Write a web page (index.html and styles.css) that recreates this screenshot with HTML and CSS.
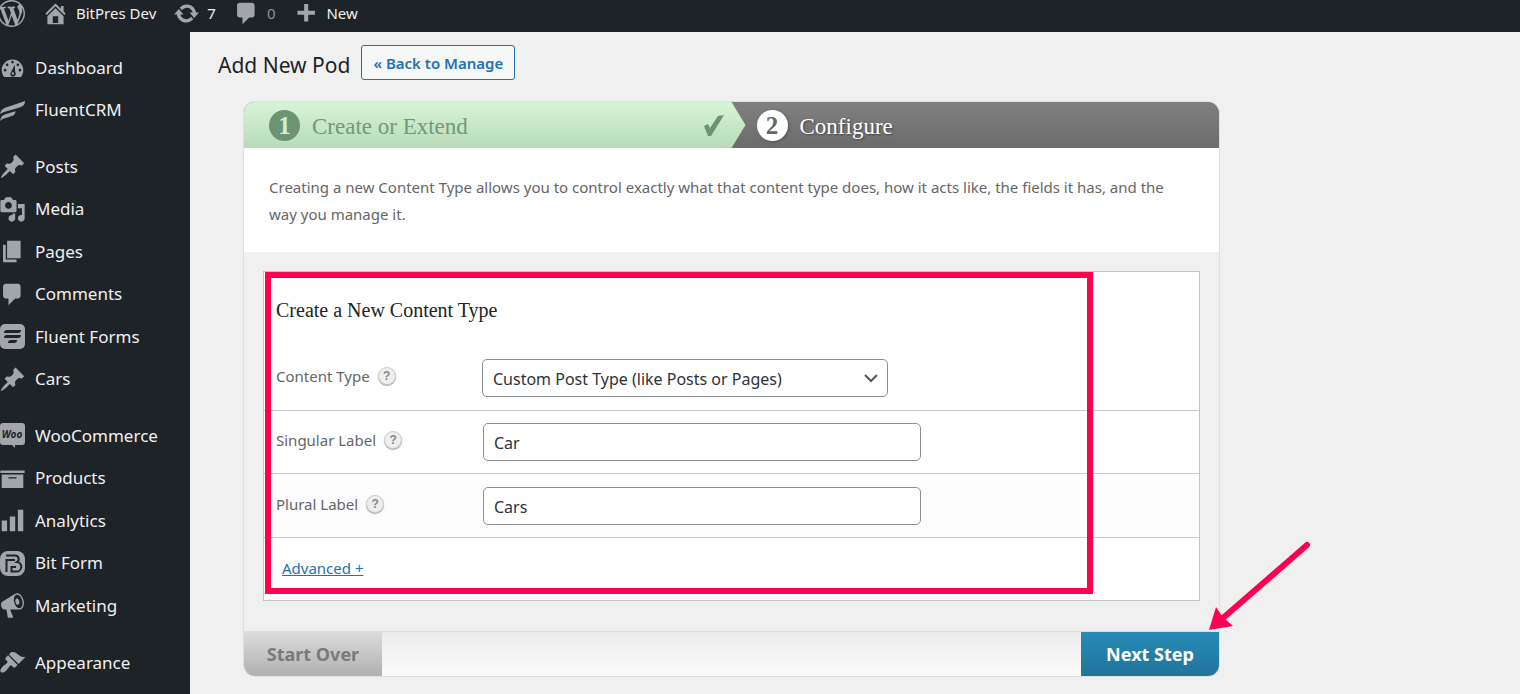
FILE: index.html
```html
<!DOCTYPE html>
<html lang="en">
<head>
<meta charset="utf-8">
<title>Add New Pod</title>
<link rel="stylesheet" href="styles.css">
</head>
<body>
<header class="topbar">
  <a class="bar-item logo" href="#" aria-label="About WordPress"><svg class="icon" viewBox="0 0 20 20"><path d="M20 10c0-5.51-4.49-10-10-10C4.48 0 0 4.49 0 10c0 5.52 4.48 10 10 10 5.51 0 10-4.48 10-10zM7.78 15.37L4.37 6.22c.55-.02 1.17-.08 1.17-.08.5-.06.44-1.13-.06-1.11 0 0-1.45.11-2.37.11-.18 0-.37 0-.58-.01C4.12 2.69 6.87 1.11 10 1.11c2.33 0 4.45.87 6.05 2.34-.68-.11-1.65.39-1.65 1.58 0 .74.45 1.36.9 2.1.35.61.55 1.36.55 2.46 0 1.49-1.4 5-1.4 5l-3.03-8.37c.54-.02.82-.17.82-.17.5-.05.44-1.25-.06-1.22 0 0-1.44.12-2.38.12-.87 0-2.33-.12-2.33-.12-.5-.03-.56 1.2-.06 1.22l.92.08 1.26 3.41zM17.41 10c.24-.64.74-1.87.43-4.25.7 1.29 1.05 2.71 1.05 4.25 0 3.29-1.73 6.24-4.4 7.78.97-2.59 1.94-5.2 2.92-7.78zM6.1 18.09C3.12 16.65 1.11 13.53 1.11 10c0-1.3.23-2.48.72-3.59C3.25 10.3 4.67 14.2 6.1 18.09zm4.03-6.63l2.58 6.98c-.86.29-1.76.45-2.71.45-.79 0-1.57-.11-2.29-.33.81-2.38 1.62-4.74 2.42-7.1z"/></svg></a>
  <a class="bar-item" href="#"><svg class="icon" viewBox="0 0 20 20"><path d="M16 8.5l1.53 1.53-1.06 1.06L10 4.6l-6.47 6.49-1.06-1.06L10 2.5l4 4v-2h2v4zm-6-2.46l6 5.99V18H4v-5.97zM12 17v-5H8v5h4z"/></svg>BitPres Dev</a>
  <a class="bar-item" href="#"><svg class="icon" viewBox="0 0 20 20"><path d="M10.2 3.28c3.53 0 6.43 2.61 6.92 6h2.08l-3.5 4-3.5-4h2.32c-.45-1.97-2.21-3.45-4.32-3.45-1.45 0-2.73.71-3.54 1.78L4.95 5.66C6.23 4.2 8.11 3.28 10.2 3.28zm-.4 13.44c-3.52 0-6.43-2.61-6.92-6H.8l3.5-4c1.17 1.33 2.33 2.67 3.5 4H5.48c.45 1.97 2.21 3.45 4.32 3.45 1.45 0 2.73-.71 3.54-1.78l1.71 1.95c-1.28 1.46-3.15 2.38-5.25 2.38z"/></svg>7</a>
  <a class="bar-item muted" href="#"><svg class="icon" viewBox="0 0 20 20"><path d="M5 2h9c1.1 0 2 .9 2 2v7c0 1.1-.9 2-2 2h-2l-5 5v-5H5c-1.1 0-2-.9-2-2V4c0-1.1.9-2 2-2z"/></svg>0</a>
  <a class="bar-item" href="#"><svg class="icon" viewBox="0 0 20 20"><path d="M17 8v3h-5v5H9v-5H4V8h5V3h3v5z"/></svg>New</a>
</header>
<div class="layout">
  <nav class="sidebar">
    <ul class="menu">
      <li><a href="#"><svg class="icon" viewBox="0 0 20 20"><path fill-rule="evenodd" d="M3.76 17h12.48c1.07-1.39 1.76-3.13 1.76-5 0-4.42-3.58-8-8-8s-8 3.58-8 8c0 1.87.69 3.61 1.76 5zM9 6a1 1 0 1 1 2 0a1 1 0 1 1-2 0zM5 8a1 1 0 1 1 2 0a1 1 0 1 1-2 0zM13 8a1 1 0 1 1 2 0a1 1 0 1 1-2 0zM3.500 12a1 1 0 1 1 2 0a1 1 0 1 1-2 0zM14.500 12a1 1 0 1 1 2 0a1 1 0 1 1-2 0zM11.600 8l.4 5.600a2 2 0 1 1-3-.3zM10.200 13.600a.9.900 0 1 0 .1 1.800a.9.900 0 0 0-.1-1.800z"/></svg>Dashboard</a></li>
      <li><a href="#"><svg class="icon" viewBox="0 2 27 27"><path d="M1 19c1-5 4-6 9-7.500L26 6c0 4-2 5.500-7 7L5 17c-2 .6-3 1.100-4 2zM1 26c1-5 3-6 7-7.200l8.500-2.500c-.3 3-1.500 4.200-5 5.200L5 23.500c-2 .6-3 1.300-4 2.500z"/></svg>FluentCRM</a></li>
    </ul>
    <ul class="menu">
      <li><a href="#"><svg class="icon" viewBox="0 0 20 20"><path d="M10.440 3.020l1.820-1.820 6.360 6.350-1.830 1.820c-1.050-.68-2.480-.57-3.410.36l-.75.75c-.92.930-1.040 2.350-.35 3.410l-1.830 1.820-2.410-2.410-2.800 2.790c-.42.420-3.380 2.710-3.800 2.290s1.860-3.390 2.280-3.810l2.790-2.790L4.100 9.360l1.830-1.820c1.050.69 2.480.57 3.400-.36l.75-.75c.93-.92 1.050-2.350.36-3.410z"/></svg>Posts</a></li>
      <li><a href="#"><svg class="icon" viewBox="0 0 20 20"><path d="M13 11V4c0-.55-.45-1-1-1h-1.670L9 1H5L3.670 3H2c-.55 0-1 .45-1 1v7c0 .55.45 1 1 1h10c.55 0 1-.45 1-1zM7 4.500c1.380 0 2.500 1.120 2.500 2.500S8.380 9.500 7 9.500 4.500 8.380 4.500 7 5.620 4.500 7 4.500zM14 6h5v10.500c0 1.380-1.120 2.500-2.500 2.500S14 17.880 14 16.500s1.120-2.500 2.500-2.500c.17 0 .34.020.5.050V9h-3V6zm-4 8.050V13h2v3.500c0 1.380-1.120 2.500-2.500 2.500S7 17.880 7 16.500 8.120 14 9.500 14c.17 0 .34.020.5.050z"/></svg>Media</a></li>
      <li><a href="#"><svg class="icon" viewBox="0 0 20 20"><path d="M6 15V2h10v13H6zm-1 1h8v2H3V5h2v11z"/></svg>Pages</a></li>
      <li><a href="#"><svg class="icon" viewBox="0 0 20 20"><path d="M5 2h9c1.100 0 2 .9 2 2v7c0 1.100-.9 2-2 2h-2l-5 5v-5H5c-1.100 0-2-.9-2-2V4c0-1.100.9-2 2-2z"/></svg>Comments</a></li>
      <li><a href="#"><svg class="icon" viewBox="0 0 27 27"><rect x="1" y="1" width="25" height="25" rx="5"/><path class="cut" d="M8 7h14c0 2-1 3-3 3H5c0-2 1-3 3-3zM8 12h14c0 2-1 3-3 3H5c0-2 1-3 3-3zM12 17h6c0 2-1 3-3 3H9c0-2 1-3 3-3z"/></svg>Fluent Forms</a></li>
      <li><a href="#"><svg class="icon" viewBox="0 0 20 20"><path d="M10.440 3.020l1.820-1.820 6.360 6.350-1.830 1.820c-1.050-.68-2.480-.57-3.410.36l-.75.75c-.92.930-1.040 2.350-.35 3.410l-1.830 1.820-2.410-2.410-2.800 2.790c-.42.420-3.380 2.710-3.800 2.290s1.860-3.390 2.280-3.810l2.790-2.790L4.100 9.360l1.830-1.820c1.050.69 2.480.57 3.400-.36l.75-.75c.93-.92 1.050-2.350.36-3.410z"/></svg>Cars</a></li>
    </ul>
    <ul class="menu">
      <li><a href="#"><svg class="icon" viewBox="0 0 27 27"><path d="M4 1h19q3 0 3 3v16q0 3-3 3h-7v3l-3-3H4q-3 0-3-3V4q0-3 3-3z"/><text class="woo" x="13" y="16" text-anchor="middle">Woo</text></svg>WooCommerce</a></li>
      <li><a href="#"><svg class="icon" viewBox="0 0 20 20"><path d="M19 4v2H1V4h18zM2 7h16v10H2V7zm11 3V9H7v1h6z"/></svg>Products</a></li>
      <li><a href="#"><svg class="icon" viewBox="0 0 20 20"><path d="M18 18V2h-4v16h4zm-6 0V7H8v11h4zm-6 0v-8H2v8h4z"/></svg>Analytics</a></li>
      <li><a href="#"><svg class="icon" viewBox="0 0 27 27"><rect x="1" y="1" width="25" height="25" rx="8"/><path class="cut-line" d="M7 5.500h9a3.500 3.500 0 0 1 2 6.500a4.700 4.700 0 0 1-1 9.500h-4.500V17h4.500M7.500 22V10h8.500"/></svg>Bit Form</a></li>
      <li><a href="#"><svg class="icon" viewBox="0 0 20 20"><path fill-rule="evenodd" d="M18.150 5.940c.46 1.620.38 3.220-.02 4.480-.42 1.280-1.260 2.180-2.300 2.480-.16.060-.26.060-.4.060-.06.020-.12.020-.18.020-.06.020-.14.020-.22.020h-6.800l2.220 5.500c.02.140-.06.260-.14.340-.08.100-.24.160-.34.160H6.950c-.1 0-.26-.06-.34-.16-.08-.08-.16-.2-.14-.34l-1-5.500H4.250l-.02-.02c-.5.060-1.080-.18-1.540-.62s-.88-1.080-1.060-1.880c-.24-.8-.2-1.560-.02-2.200.18-.62.58-1.080 1.060-1.300l.02-.02 9-5.400c.1-.06.180-.1.240-.16.060-.04.140-.08.240-.12.160-.08.280-.12.500-.18 1.040-.3 2.240.1 3.220.98s1.840 2.240 2.260 3.860zm-2.580 5.980h-.02c.4-.1.740-.34 1.040-.7.580-.7.860-1.760.86-3.040 0-.64-.1-1.300-.28-1.980-.34-1.360-1.020-2.500-1.780-3.240s-1.680-1.100-2.460-.88c-.82.220-1.400.96-1.700 2-.32 1.040-.28 2.360.06 3.720.38 1.360 1 2.500 1.800 3.240.78.740 1.620 1.100 2.480.88zm-2.540-7.080c.22-.04.420-.02.620.04.380.16.760.48 1.020 1s.42 1.200.42 1.780c0 .3-.04.560-.12.800-.18.480-.44.840-.86.940-.34.100-.8-.06-1.140-.4s-.64-.86-.78-1.500c-.18-.62-.12-1.240.02-1.720s.48-.84.820-.94z"/></svg>Marketing</a></li>
    </ul>
    <ul class="menu">
      <li><a href="#"><svg class="icon" viewBox="0 0 20 20"><path d="M14.480 11.060L7.410 3.990l1.500-1.500c.5-.56 2.300-.47 3.510.32 1.210.8 1.430 1.280 2.910 2.100 1.180.64 2.450 1.260 4.450.85zm-.71.71L6.700 4.700 4.930 6.470c-.39.390-.39 1.020 0 1.410l1.060 1.060c.39.390.39 1.030 0 1.420-.6.600-1.430 1.110-2.210 1.690-.35.260-.7.530-1.010.84C1.430 14.230.4 16.080 1.400 17.070c.99 1 2.840-.03 4.180-1.360.31-.31.580-.66.850-1.020.57-.78 1.080-1.610 1.690-2.210.39-.39 1.020-.39 1.410 0l1.060 1.060c.39.390 1.020.39 1.410 0z"/></svg>Appearance</a></li>
    </ul>
  </nav>
  <main class="main">
    <div class="heading">
      <h1>Add New Pod</h1>
      <a class="back" href="#">« Back to Manage</a>
    </div>
    <form class="wizard">
      <ol class="steps">
        <li class="step done"><span class="num">1</span><span class="name">Create or Extend</span><svg class="check" viewBox="0 0 20 21"><path d="M0 11l4-2 2 4L14 1l6-1L7 21H4z"/></svg></li>
        <li class="step current"><span class="num">2</span><span class="name">Configure</span></li>
      </ol>
      <p class="intro">Creating a new Content Type allows you to control exactly what that content type does, how it acts like, the fields it has, and the way you manage it.</p>
      <div class="body">
        <section class="panel">
          <h2>Create a New Content Type</h2>
          <div class="row first">
            <div class="caption"><label for="type">Content Type</label><button type="button" class="help" aria-label="Content type help">?</button></div>
            <div class="field">
              <select id="type"><option>Custom Post Type (like Posts or Pages)</option></select>
              <svg class="chevron" viewBox="0 0 14 9"><path d="M1 1l6 6 6-6"/></svg>
            </div>
          </div>
          <div class="row">
            <div class="caption"><label for="singular">Singular Label</label><button type="button" class="help" aria-label="Singular label help">?</button></div>
            <div class="field"><input id="singular" type="text" value="Car"></div>
          </div>
          <div class="row alt">
            <div class="caption"><label for="plural">Plural Label</label><button type="button" class="help" aria-label="Plural label help">?</button></div>
            <div class="field"><input id="plural" type="text" value="Cars"></div>
          </div>
          <div class="more"><a href="#">Advanced +</a></div>
          <div class="highlight"></div>
        </section>
      </div>
      <div class="footer">
        <button type="button" class="start">Start Over</button>
        <button type="submit" class="next">Next Step</button>
        <svg class="arrow" viewBox="0 0 102 90"><path class="shaft" d="M98 4L14 77"/><path d="M0 89L7 66l6 9 4 4 7 6z"/></svg>
      </div>
    </form>
  </main>
</div>
</body>
</html>
```

FILE: styles.css
```css
* { box-sizing: border-box; }
body {
  margin: 0;
  background: #f0f0f0;
  color: #1d2327;
  font: 16px/24px "Noto Sans", "Open Sans", sans-serif;
}
a { text-decoration: none; }
ul, ol { margin: 0; padding: 0; list-style: none; }

.icon {
  flex: none;
  width: 27px;
  height: 27px;
  margin-left: -1px;
  fill: #a2a6ab;
}

.topbar {
  display: flex;
  align-items: center;
  gap: 18px;
  height: 32px;
  padding-bottom: 6px;
  background: #1d2327;
}
.bar-item {
  display: flex;
  align-items: center;
  gap: 7px;
  color: #f0f0f1;
  font-size: 15px;
}
.bar-item.muted { color: #8c9196; }
.topbar .logo { margin-left: -1px; }

.layout { display: flex; min-height: calc(100vh - 32px); }
.sidebar {
  flex: none;
  display: flex;
  flex-direction: column;
  gap: 14px;
  width: 190px;
  padding-top: 14px;
  background: #1d2327;
}
.menu a {
  display: flex;
  align-items: center;
  gap: 9px;
  height: 42px;
  color: #f0f0f1;
  font-size: 17px;
}
.menu li:nth-child(odd) a { height: 43px; }
.cut { fill: #1d2327; }
.cut-line { fill: none; stroke: #1d2327; stroke-width: 2; }
.woo { fill: #1d2327; font: italic bold 10px "Open Sans", sans-serif; }

.main { flex: 1; padding: 13px 300px 0 28px; }
.heading {
  display: flex;
  align-items: flex-start;
  gap: 11px;
}
h1 { margin: 0; font-size: 21px; font-weight: 400; line-height: 41px; }
.back {
  height: 35px;
  padding: 0 11px;
  border: 1px solid #2271b1;
  border-radius: 3px;
  background: #f6f7f7;
  color: #2271b1;
  font-size: 15px;
  font-weight: 600;
  line-height: 34px;
}

.wizard {
  margin: 15px 0 0 25px;
  border: 1px solid #dfdfdf;
  border-radius: 12px;
}
.steps {
  display: flex;
  height: 46px;
  overflow: hidden;
  border-radius: 11px 11px 0 0;
  background: linear-gradient(#808080, #6b6b6b);
}
.step {
  display: flex;
  flex: 1;
  align-items: center;
  gap: 12px;
  padding: 0 25px;
  color: #fff;
  font: 23px/46px "Liberation Serif", serif;
}
.name { padding-top: 3px; }
.done {
  flex: 0 0 calc(50% + 14px);
  padding-right: 22px;
  background: linear-gradient(#d6f5d6, #b9dbb9);
  clip-path: polygon(0 0, calc(100% - 14px) 0, 100% 50%, calc(100% - 14px) 100%, 0 100%);
  color: #729a76;
}
.current { padding-left: 11px; text-shadow: 1px 1px 2px #444; }
.num {
  width: 31px;
  height: 31px;
  border-radius: 50%;
  background: #6c9472;
  color: #d0eed0;
  font-size: 25px;
  font-weight: 700;
  line-height: 31px;
  text-align: center;
}
.current .num {
  background: #fff;
  box-shadow: 1px 1px 3px #555;
  color: #666;
  text-shadow: none;
}
.check { width: 20px; height: 21px; margin-left: auto; fill: #6c9472; }

.intro {
  margin: 0;
  padding: 26px 25px 24px;
  background: #fff;
  color: #666;
  font-size: 15px;
  line-height: 27px;
}
.body { padding: 19px 19px 30px; }
.panel {
  position: relative;
  border: 1px solid #c3c4c7;
  background: #fff;
}
h2 {
  margin: 0;
  padding: 22px 12px 20px;
  font: 20px/32px "Liberation Serif", serif;
}
.row {
  display: flex;
  align-items: center;
  height: 63px;
  padding-left: 12px;
  border-top: 1px solid #c9cacc;
}
.row.first { height: 64px; border-top: 0; }
.row.alt { height: 64px; background: #fcfcfc; }
.caption { display: flex; align-items: center; padding-bottom: 4px; }
.caption label { color: #666; font-size: 15px; }
.help {
  width: 18px;
  height: 18px;
  margin-left: 8px;
  padding: 0;
  border: 1px solid #ccc;
  border-radius: 50%;
  background: #eee;
  box-shadow: 0 1px 1px #aaa;
  color: #888;
  font: bold 12px/16px "Liberation Sans", sans-serif;
}
.field {
  position: relative;
  width: 438px;
  margin-left: auto;
  margin-right: 278px;
}
.row.first .field { width: 406px; margin-right: 311px; }
.field input, .field select {
  display: block;
  width: 100%;
  height: 38px;
  padding: 2px 10px 0;
  border: 1px solid #8c8f94;
  border-radius: 5px;
  background: #fff;
  color: #2c3338;
  font: 16px/34px "Noto Sans", "Open Sans", sans-serif;
  appearance: none;
}
.chevron {
  position: absolute;
  top: 15px;
  right: 10px;
  width: 14px;
  height: 9px;
  fill: none;
  stroke: #50575e;
  stroke-width: 2;
  pointer-events: none;
}
.more {
  height: 63px;
  padding-left: 18px;
  border-top: 1px solid #c9cacc;
  font-size: 15px;
  line-height: 60px;
}
.more a { color: #2271b1; text-decoration: underline; }
.highlight {
  position: absolute;
  inset: 0 106px 6px 1px;
  border: 6px solid #ff0050;
  pointer-events: none;
}

.footer {
  position: relative;
  display: flex;
  justify-content: space-between;
  border-top: 1px solid #dfdfdf;
  border-radius: 0 0 11px 11px;
  background: linear-gradient(#ededed, #fafafa);
}
.footer button {
  width: 138px;
  height: 44px;
  padding: 0;
  border: 0;
  font: bold 18px/44px "Noto Sans", "Open Sans", sans-serif;
}
.footer .start {
  border-radius: 0 0 0 11px;
  background: linear-gradient(#dcdcdc, #b0b0b0);
  color: #7a7a7a;
}
.footer .next {
  border-radius: 0 0 11px 0;
  background: linear-gradient(#278ab7, #21759b);
  color: #fff;
}
.arrow {
  position: absolute;
  right: -92px;
  bottom: 45px;
  width: 102px;
  height: 90px;
  fill: #ff0050;
}
.shaft { stroke: #ff0050; stroke-width: 6; stroke-linecap: round; }
```
